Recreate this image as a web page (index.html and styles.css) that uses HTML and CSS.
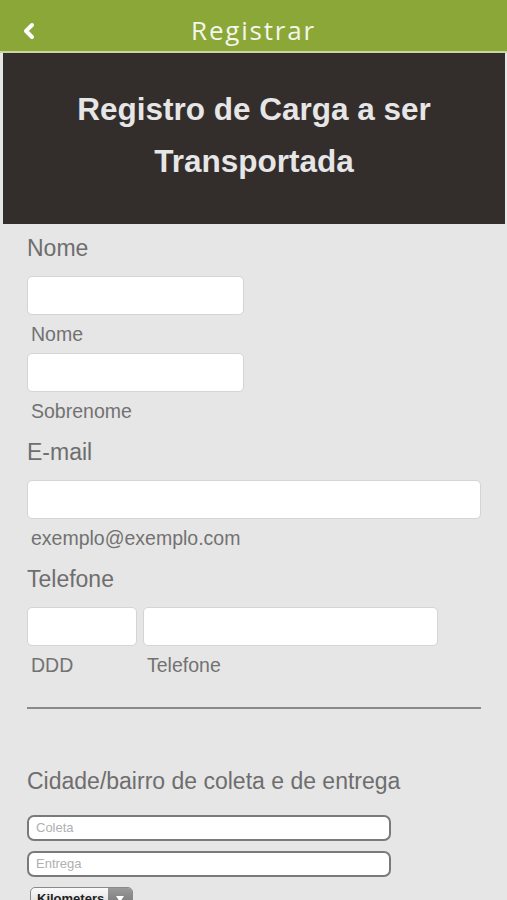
FILE: index.html
```html
<!DOCTYPE html>
<html lang="pt">
<head>
<meta charset="utf-8">
<title>Registrar</title>
<link rel="stylesheet" href="styles.css">
</head>
<body>
<header class="topbar">
  <span class="back"><svg width="14" height="18" viewBox="0 0 14 18"><path d="M10 3 L4 9 L10 15" fill="none" stroke="#fff" stroke-width="4" stroke-linecap="round" stroke-linejoin="round"/></svg></span>
  <h1 class="title">Registrar</h1>
</header>
<div class="banner">
  <h2>Registro de Carga a ser<br>Transportada</h2>
</div>
<main class="form">
  <div class="section-label first">Nome</div>
  <div class="field"><div class="box w217"></div><div class="hint">Nome</div></div>
  <div class="field"><div class="box w217"></div><div class="hint">Sobrenome</div></div>
  <div class="section-label">E-mail</div>
  <div class="field"><div class="box wfull"></div><div class="hint">exemplo@exemplo.com</div></div>
  <div class="section-label">Telefone</div>
  <div class="phone">
    <div class="field"><div class="box w110"></div><div class="hint">DDD</div></div>
    <div class="field"><div class="box w295"></div><div class="hint">Telefone</div></div>
  </div>
  <hr class="divider">
  <div class="section-label big">Cidade/bairro de coleta e de entrega</div>
  <div class="text-input">Coleta</div>
  <div class="text-input">Entrega</div>
  <div class="select"><span class="sel-text">Kilometers</span><span class="sel-btn"><svg width="10" height="8" viewBox="0 0 10 8"><path d="M1 1 L9 1 L5 7 Z" fill="#fff"/></svg></span></div>
</main>
</body>
</html>
```
FILE: styles.css
```css
* { box-sizing: border-box; }
html, body { margin: 0; padding: 0; }
body {
  background: #e6e6e6;
  font-family: "Liberation Sans", Arial, sans-serif;
  width: 507px;
  height: 900px;
  overflow: hidden;
}
.topbar {
  height: 53px;
  background: #8ba737;
  border-bottom: 2px solid #c9d6a0;
  display: flex;
  align-items: center;
  justify-content: center;
  position: relative;
}
.back {
  position: absolute;
  left: 22px;
  top: 22px;
  display: flex;
}
.title {
  margin: 8px 0 0 0;
  color: #f4f6ec;
  font-family: "Open Sans", sans-serif;
  font-weight: 500;
  font-size: 26px;
  letter-spacing: 1.8px;
}
.banner {
  margin: 0 2px 0 3px;
  height: 171px;
  padding-bottom: 8px;
  background: #332d2c;
  display: flex;
  align-items: center;
  justify-content: center;
}
.banner h2 {
  margin: 0;
  color: #e6e6e6;
  font-family: "Liberation Sans", Arial, sans-serif;
  font-weight: bold;
  font-size: 31.5px;
  line-height: 52px;
  text-align: center;
}
.form {
  padding: 11px 26px 0 27px;
}
.section-label {
  color: #6e6e6e;
  font-size: 23px;
  line-height: 26px;
  margin: 9px 0 15px 0;
}
.section-label.first { margin-top: 0; }
.section-label.big { margin: 59px 0 21px 0; }
.field { display: flex; flex-direction: column; }
.box {
  height: 39px;
  background: #fff;
  border: 1px solid #d4d4d4;
  border-radius: 5px;
}
.w217 { width: 217px; }
.wfull { width: 454px; }
.w110 { width: 110px; }
.w295 { width: 295px; }
.hint {
  color: #727272;
  font-size: 19.5px;
  line-height: 22px;
  margin: 8px 0 8px 4px;
}
.phone { display: flex; gap: 6px; }
.divider {
  margin: 23px 0 0 0;
  width: 454px;
  border: 0;
  border-top: 2px solid #8a8a8a;
}
.text-input {
  width: 364px;
  height: 26px;
  background: #fff;
  border: 2px solid #7a7a7a;
  border-radius: 7px;
  color: #b0b0b0;
  font-size: 13px;
  padding-left: 7px;
  line-height: 22px;
  margin-bottom: 10px;
}
.select {
  margin: 0 0 0 3px;
  width: 103px;
  height: 24px;
  border: 1px solid #8a8a8a;
  border-radius: 5px;
  background: linear-gradient(#fafafa, #d8d8d8);
  display: flex;
  overflow: hidden;
}
.sel-text {
  flex: 1;
  font-size: 13px;
  font-weight: bold;
  color: #222;
  padding: 3px 0 0 6px;
}
.sel-btn {
  width: 24px;
  background: linear-gradient(#9a9a9a, #6e6e6e);
  display: flex;
  align-items: center;
  justify-content: center;
}
```
